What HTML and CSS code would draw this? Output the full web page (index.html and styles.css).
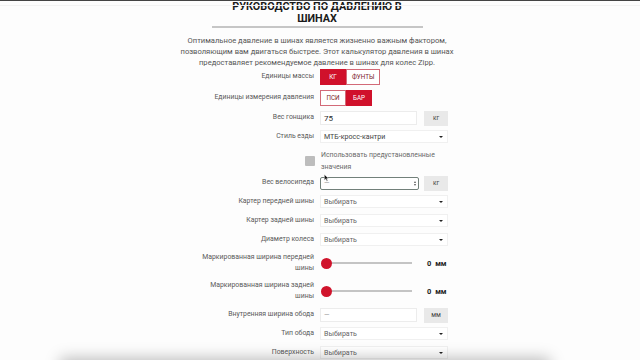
FILE: index.html
```html
<!DOCTYPE html>
<html lang="ru">
<head>
<meta charset="utf-8">
<link rel="stylesheet" href="styles.css">
</head>
<body>
<div class="topline"></div>
<div class="subline"></div>
<main class="page">
  <header class="head">
    <h1 class="title">РУКОВОДСТВО ПО ДАВЛЕНИЮ В ШИНАХ</h1>
    <hr class="rule">
    <p class="intro">Оптимальное давление в шинах является жизненно важным фактором,<br>позволяющим вам двигаться быстрее. Этот калькулятор давления в шинах<br>предоставляет рекомендуемое давление в шинах для колес Zipp.</p>
  </header>

  <section class="form">
    <div class="row tall">
      <span class="label">Единицы массы</span>
      <div class="toggle">
        <span class="tbtn on">КГ</span>
        <span class="tbtn">ФУНТЫ</span>
      </div>
    </div>
    <div class="row tall">
      <span class="label">Единицы измерения давления</span>
      <div class="toggle">
        <span class="tbtn">ПСИ</span>
        <span class="tbtn on">БАР</span>
      </div>
    </div>
    <div class="row">
      <span class="label">Вес гонщика</span>
      <div class="ctrl">
        <span class="input value">75</span>
        <span class="unit">кг</span>
      </div>
    </div>
    <div class="row">
      <span class="label">Стиль езды</span>
      <div class="select"><span class="sel-text dark">МТБ-кросс-кантри</span><span class="arrow"></span></div>
    </div>
    <div class="row check-row">
      <span class="label"><span class="checkbox"></span></span>
      <span class="check-text">Использовать предустановленные значения</span>
    </div>
    <div class="row">
      <span class="label">Вес велосипеда</span>
      <div class="ctrl">
        <span class="input focus"><span class="dash">—</span><span class="spin"><i class="up"></i><i class="down"></i></span></span>
        <span class="unit">кг</span>
      </div>
    </div>
    <div class="row">
      <span class="label">Картер передней шины</span>
      <div class="select"><span class="sel-text">Выбирать</span><span class="arrow"></span></div>
    </div>
    <div class="row">
      <span class="label">Картер задней шины</span>
      <div class="select"><span class="sel-text">Выбирать</span><span class="arrow"></span></div>
    </div>
    <div class="row">
      <span class="label">Диаметр колеса</span>
      <div class="select"><span class="sel-text">Выбирать</span><span class="arrow"></span></div>
    </div>
    <div class="row slider-row">
      <span class="label">Маркированная ширина передней шины</span>
      <div class="slider">
        <span class="track"><span class="thumb"></span></span>
        <span class="sval">0 <span class="mm">мм</span></span>
      </div>
    </div>
    <div class="row slider-row">
      <span class="label">Маркированная ширина задней шины</span>
      <div class="slider">
        <span class="track"><span class="thumb"></span></span>
        <span class="sval">0 <span class="mm">мм</span></span>
      </div>
    </div>
    <div class="row">
      <span class="label">Внутренняя ширина обода</span>
      <div class="ctrl">
        <span class="input"><span class="dash">—</span></span>
        <span class="unit">мм</span>
      </div>
    </div>
    <div class="row">
      <span class="label">Тип обода</span>
      <div class="select"><span class="sel-text">Выбирать</span><span class="arrow"></span></div>
    </div>
    <div class="row">
      <span class="label">Поверхность</span>
      <div class="select"><span class="sel-text">Выбирать</span><span class="arrow"></span></div>
    </div>
  </section>
</main>
<svg class="cursor" width="5" height="8" viewBox="0 0 7 11"><path d="M0.5 0.5 L0.5 8.5 L2.5 6.8 L4 10 L5.2 9.4 L3.8 6.3 L6.3 6.3 Z" fill="#111" stroke="#fff" stroke-width="0.6"/></svg>
<div class="bottom-shadow"></div>
</body>
</html>
```

FILE: styles.css
```css
html, body {
  margin: 0;
  padding: 0;
}
body {
  background: #fdfdfd;
  font-family: Roboto, "Noto Sans", "Liberation Sans", sans-serif;
  color: #555;
  overflow: hidden;
  height: 360px;
}
.topline {
  position: fixed;
  left: 0;
  right: 0;
  top: 0;
  height: 1px;
  background: #444;
  z-index: 5;
}
.subline {
  position: fixed;
  left: 0;
  right: 0;
  top: 5px;
  height: 1px;
  background: #f3f3f3;
}
.page {
  width: 640px;
}
.head {
  width: 280px;
  margin: 0 auto;
  padding-right: 6px;
}
.title {
  margin: 0 auto;
  padding-top: 1px;
  width: 190px;
  font-size: 10.8px;
  line-height: 12px;
  font-weight: 700;
  color: #1a1a1a;
  text-align: center;
}
.rule {
  display: block;
  width: 211px;
  height: 2px;
  border: 0;
  background: #c6c6c6;
  margin: 1px auto 0;
}
.intro {
  margin: 7px 0 0;
  font-size: 7.6px;
  line-height: 11px;
  text-align: center;
  white-space: nowrap;
  color: #555;
}
.form {
  display: flex;
  flex-direction: column;
  gap: 5px;
  margin-top: 0.5px;
}
.row {
  display: grid;
  grid-template-columns: 120px 128px;
  column-gap: 6px;
  justify-content: center;
  align-items: center;
  height: 14px;
  padding-left: 2px;
}
.row.tall {
  height: 16px;
}
.label {
  text-align: right;
  font-size: 6.9px;
  line-height: 11.5px;
  color: #5a5a5a;
}
.toggle {
  display: flex;
  height: 16px;
}
.tbtn {
  box-sizing: border-box;
  min-width: 26px;
  padding: 0 5px;
  display: flex;
  align-items: center;
  justify-content: center;
  font-size: 6.3px;
  color: #7a1c2a;
  background: #fff;
  border: 1px solid #d36a78;
}
.tbtn.on {
  background: #d0112b;
  border-color: #d0112b;
  color: #fff;
}
.ctrl {
  display: flex;
  align-items: center;
  justify-content: space-between;
}
.input {
  box-sizing: border-box;
  width: 97px;
  height: 14px;
  border: 1px solid #ececec;
  background: #fff;
  display: flex;
  align-items: center;
  justify-content: space-between;
  padding: 0 3px;
  font-size: 8px;
  color: #333;
}
.input.value {
  color: #2a2a2a;
}
.input.focus {
  width: 99px;
  height: 13px;
  border: 1px solid #72807a;
  border-radius: 2px;
  padding-right: 2px;
}
.dash {
  color: #999;
  font-size: 7px;
}
.spin {
  display: flex;
  flex-direction: column;
  gap: 1px;
}
.spin i {
  width: 0;
  height: 0;
  border-left: 1.5px solid transparent;
  border-right: 1.5px solid transparent;
}
.spin .up {
  border-bottom: 2px solid #555;
}
.spin .down {
  border-top: 2px solid #555;
}
.unit {
  box-sizing: border-box;
  width: 24px;
  height: 15px;
  background: #e9e9e9;
  display: flex;
  align-items: center;
  justify-content: center;
  font-size: 6.5px;
  color: #444;
}
.select {
  box-sizing: border-box;
  height: 13px;
  border: 1px solid #f0f0f0;
  background: #fff;
  display: flex;
  align-items: center;
  justify-content: space-between;
  padding: 0 3px;
}
.sel-text {
  font-size: 7.1px;
  color: #666;
}
.sel-text.dark {
  color: #444;
}
.arrow {
  width: 0;
  height: 0;
  border-left: 2px solid transparent;
  border-right: 2px solid transparent;
  border-top: 2.5px solid #222;
  margin-right: 1px;
}
.check-row {
  height: 22px;
  margin-top: 0.5px;
  margin-bottom: -0.5px;
}
.check-row .label {
  display: flex;
  justify-content: flex-end;
}
.checkbox {
  display: block;
  width: 10px;
  height: 10px;
  background: #bdbdbd;
  border-radius: 1px;
  margin-right: -1px;
}
.check-text {
  font-size: 6.9px;
  line-height: 12px;
  color: #6a6a6a;
  padding-left: 1px;
  width: 125px;
}
.slider-row {
  height: 23px;
}
.slider {
  display: flex;
  align-items: center;
}
.track {
  position: relative;
  width: 86px;
  height: 1.5px;
  background: #c4c4c4;
  margin-left: 6px;
}
.thumb {
  position: absolute;
  left: -5.5px;
  top: -4.75px;
  width: 11px;
  height: 11px;
  border-radius: 50%;
  background: #d0142c;
}
.sval {
  margin-left: 15px;
  font-size: 7.5px;
  font-weight: 700;
  color: #222;
}
.mm {
  margin-left: 2px;
}
.cursor {
  position: fixed;
  left: 324px;
  top: 174px;
}
.bottom-shadow {
  position: fixed;
  left: 70px;
  width: 470px;
  top: 368px;
  height: 40px;
  background: #ccc;
  box-shadow: 0 0 14px 10px rgba(0, 0, 0, 0.26);
}
```
